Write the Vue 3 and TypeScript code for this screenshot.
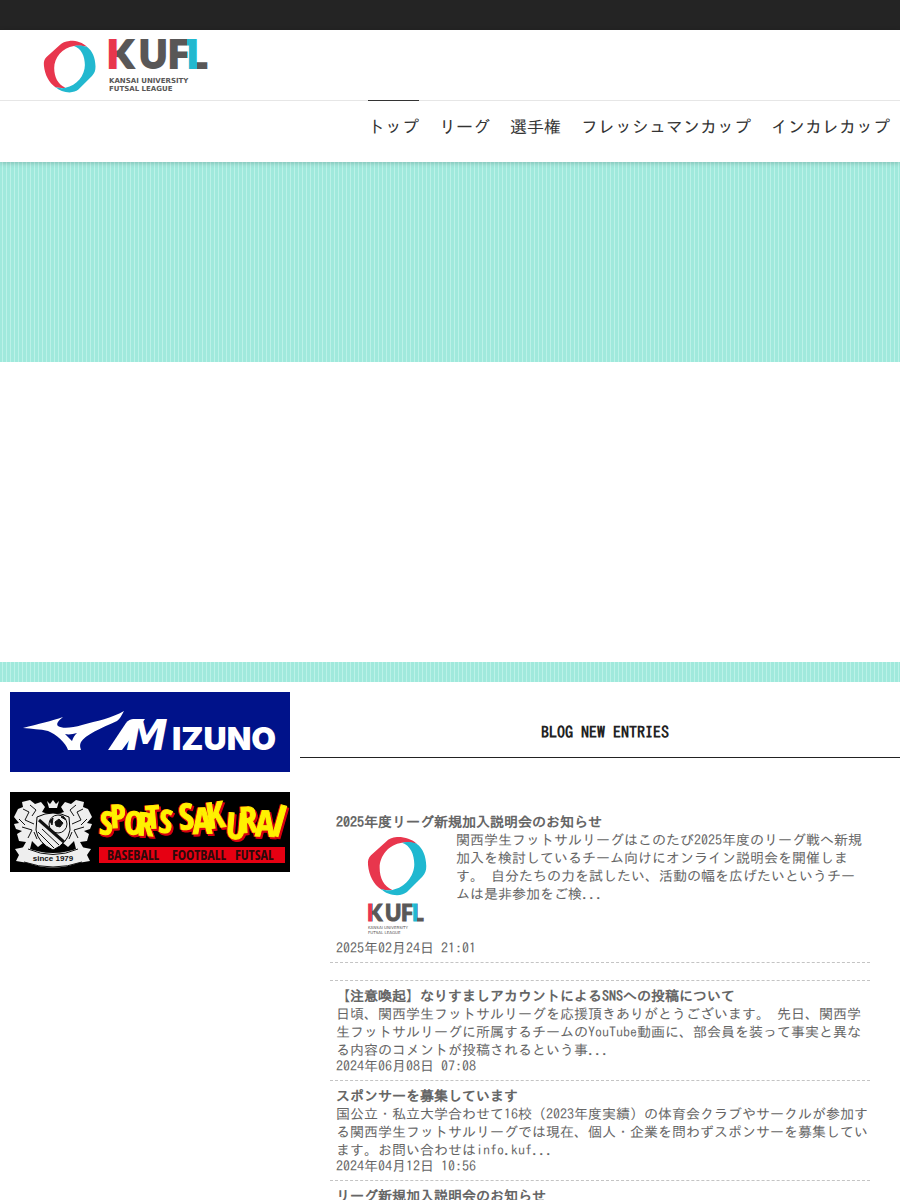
<script setup lang="ts">
interface NavItem {
  label: string
  active?: boolean
}

interface Entry {
  title: string
  body: string
  date: string
}

const navItems: NavItem[] = [
  { label: 'トップ', active: true },
  { label: 'リーグ' },
  { label: '選手権' },
  { label: 'フレッシュマンカップ' },
  { label: 'インカレカップ' },
]

const featured: Entry[] = [
  {
    title: '2025年度リーグ新規加入説明会のお知らせ',
    body: '関西学生フットサルリーグはこのたび2025年度のリーグ戦へ新規加入を検討しているチーム向けにオンライン説明会を開催します。 自分たちの力を試したい、活動の幅を広げたいというチームは是非参加をご検...',
    date: '2025年02月24日 21:01',
  },
]

const entries: Entry[] = [
  {
    title: '【注意喚起】なりすましアカウントによるSNSへの投稿について',
    body: '日頃、関西学生フットサルリーグを応援頂きありがとうございます。 先日、関西学生フットサルリーグに所属するチームのYouTube動画に、部会員を装って事実と異なる内容のコメントが投稿されるという事...',
    date: '2024年06月08日 07:08',
  },
  {
    title: 'スポンサーを募集しています',
    body: '国公立・私立大学合わせて16校（2023年度実績）の体育会クラブやサークルが参加する関西学生フットサルリーグでは現在、個人・企業を問わずスポンサーを募集しています。お問い合わせはinfo.kuf...',
    date: '2024年04月12日 10:56',
  },
  { title: 'リーグ新規加入説明会のお知らせ', body: '', date: '' },
]

const ringRed =
  'M150 24C135 8 110 2 90 3C75 4 65 9 57 17L12 58C4 66 2 74 3 86C6 118 20 145 42 160C55 163 66 163 76 162C50 150 38 125 38 95C38 60 65 25 105 20C125 18 140 20 150 24Z'
const ringCyan =
  'M105 20C130 28 142 55 142 85C142 120 115 155 76 162C66 164 52 164 40 158C55 172 72 178 90 178C103 177 112 174 120 168L166 122C175 112 178 104 178 90C177 60 168 38 150 24C138 18 120 17 105 20Z'
</script>

<template>
  <div class="page">
    <div class="topbar"></div>
    <header class="header">
      <a class="brand" href="#" aria-label="KUFL">
        <svg width="172" height="60" viewBox="0 0 172 60">
          <defs>
            <linearGradient id="wordmark" gradientUnits="userSpaceOnUse" x1="0" y1="0" x2="200" y2="0">
              <stop offset="0.385" stop-color="#e8364d" />
              <stop offset="0.385" stop-color="#595757" />
              <stop offset="0.735" stop-color="#595757" />
              <stop offset="0.735" stop-color="#22b8cf" />
              <stop offset="0.785" stop-color="#22b8cf" />
              <stop offset="0.785" stop-color="#595757" />
            </linearGradient>
          </defs>
          <g transform="translate(3 5) scale(0.295)">
            <path :d="ringRed" fill="#e8364d" />
            <path :d="ringCyan" fill="#22b8cf" />
          </g>
          <text class="mark" x="67 99 128 147" y="33" font-size="38" fill="url(#wordmark)" stroke="url(#wordmark)" stroke-width="2">KUFL</text>
          <text class="sub" x="69" y="48" font-size="7">KANSAI UNIVERSITY</text>
          <text class="sub" x="69" y="56" font-size="7">FUTSAL LEAGUE</text>
        </svg>
      </a>
      <nav class="nav">
        <ul>
          <li v-for="item in navItems" :key="item.label">
            <a href="#" :class="{ active: item.active }">{{ item.label }}</a>
          </li>
        </ul>
      </nav>
    </header>
    <div class="stripes hero"></div>
    <div class="blank"></div>
    <div class="stripes strip"></div>

    <main class="main">
      <aside class="side">
        <a href="#" aria-label="MIZUNO">
          <svg class="banner" viewBox="0 0 280 80">
            <rect width="280" height="80" fill="#00128a" />
            <path
              fill="#fff"
              d="M13 36C28 32 42 29 53 25C48 29 46 32 48 34C52 37 62 36 72 33C87 29 102 26 114 19C111 24 110 27 107 29C91 36 75 43 71 50C69 54 71 57 71 58H58C56 51 46 42 38 39C30 37 22 37 13 36Z"
            />
            <path fill="#00128a" d="M55 42C59 43 63 42 67 41C64 44 63 46 62 49Z" />
            <path fill="#fff" d="M98 58L116 31Q119 27 124 27H135L112 58Z" />
            <text class="mz-m" x="116" y="58" font-size="42">M</text>
            <text class="mz" x="162" y="58" font-size="32">IZUNO</text>
          </svg>
        </a>
        <a href="#" aria-label="SPORTS SAKURAI">
          <svg class="banner" viewBox="0 0 280 80">
            <rect width="280" height="80" />
            <g fill="#eee">
              <path d="M4 25L8 17L13 15L12 10L20 8L25 12L31 10L35 15L32 20L38 22L40 27L34 29L35 36L29 43L33 51L28 55L22 49L20 57H12L16 50L9 49L7 42L12 39L6 37L4 32L9 31Z" />
              <path d="M82 25L78 17L73 15L74 10L66 8L61 12L55 10L51 15L54 20L48 22L46 27L52 29L51 36L57 43L53 51L58 55L64 49L66 57H74L70 50L77 49L79 42L74 39L80 37L82 32L77 31Z" />
              <path d="M37 9L40 12L43 8L46 12L49 9L47 16H39Z" />
              <path d="M5 57L15 55Q43 67 71 55L81 57L77 63L80 69L68 71Q43 80 18 71L6 69L9 63Z" />
            </g>
            <path d="M27 25Q43 17 59 25L60 38Q58 51 43 58Q28 51 26 38Z" fill="#eee" stroke="#000" />
            <g fill="none" stroke="#111">
              <path d="M13 17L19 20L15 28L24 32M20 13L26 18L22 24M12 35L22 38L18 46M9 27L15 33M24 40L27 47" />
              <path d="M73 17L67 20L71 28L62 32M66 13L60 18L64 24M74 35L64 38L68 46M77 27L71 33M62 40L59 47" />
              <path d="M28 40L44 56M32 37L49 53M18 57Q43 68 68 57M14 70Q43 80 72 70" />
              <path d="M29 28L54 50" stroke-width="3" />
              <circle cx="48" cy="32" r="9" />
              <path d="M45 30L49 27L53 31L50 35L46 34ZM40 29L43 26L42 33ZM53 24L56 28L51 25Z" fill="#111" />
            </g>
            <text class="since" x="43" y="69" font-size="8" text-anchor="middle">since 1979</text>
            <g class="comic">
              <text x="89 101 114 127 137 148" y="42 36 42 43 37 40" rotate="4 -3 2 4 -5 6" font-size="32">SPORTS</text>
              <text x="170 183 198 215 230 245" y="38 42 37 46 41 44" rotate="-5 -2 -8 5 -3 2" font-size="36">SAKURA</text>
              <text x="259" y="42" rotate="16" font-size="44">I</text>
            </g>
            <rect x="89" y="55" width="186" height="16" fill="#e60012" />
            <g class="label" font-size="14">
              <text x="97" y="68">BASEBALL</text>
              <text x="162" y="68">FOOTBALL</text>
              <text x="225" y="68">FUTSAL</text>
            </g>
          </svg>
        </a>
      </aside>

      <section class="blog">
        <h2>BLOG NEW ENTRIES</h2>
        <ul class="entries">
          <li v-for="e in featured" :key="e.title">
            <a class="title" href="#">{{ e.title }}</a>
            <div class="media">
              <svg class="thumb" width="100" height="110" viewBox="0 0 100 110">
                <defs>
                  <linearGradient id="thumb-mark" gradientUnits="userSpaceOnUse" x1="0" y1="0" x2="100" y2="0">
                    <stop offset="0.26" stop-color="#e8364d" />
                    <stop offset="0.26" stop-color="#595757" />
                    <stop offset="0.665" stop-color="#595757" />
                    <stop offset="0.665" stop-color="#1fb8d0" />
                    <stop offset="0.715" stop-color="#1fb8d0" />
                    <stop offset="0.715" stop-color="#595757" />
                  </linearGradient>
                </defs>
                <g transform="translate(21 5) scale(0.333)">
                  <path :d="ringRed" fill="#e8364d" />
                  <path :d="ringCyan" fill="#1fb8d0" />
                </g>
                <text class="mark" x="21 39 55 66" y="90" font-size="22" fill="url(#thumb-mark)" stroke="url(#thumb-mark)" stroke-width="1">KUFL</text>
                <text class="tiny" x="22" y="98" font-size="4">KANSAI UNIVERSITY</text>
                <text class="tiny" x="22" y="103" font-size="4">FUTSAL LEAGUE</text>
              </svg>
              <p>{{ e.body }}</p>
            </div>
            <time>{{ e.date }}</time>
          </li>
          <li class="spacer" aria-hidden="true"></li>
          <li v-for="e in entries" :key="e.title">
            <a class="title" href="#">{{ e.title }}</a>
            <p v-if="e.body">{{ e.body }}</p>
            <time v-if="e.date">{{ e.date }}</time>
          </li>
        </ul>
      </section>
    </main>
  </div>
</template>

<style>
body {
  margin: 0;
  background: #fff;
}
</style>

<style scoped>
.page {
  height: 100vh;
  overflow: hidden;
  color: #666;
  font-family: 'IPAGothic', 'Noto Sans Mono CJK JP', 'Noto Sans CJK JP', monospace;
  font-size: 14px;
  line-height: 18px;
}
ul,
p,
h2 {
  margin: 0;
  padding: 0;
}
ul {
  list-style: none;
}
a {
  color: inherit;
  text-decoration: none;
}
.topbar {
  height: 30px;
  background: #242424;
}
.header {
  position: relative;
  box-shadow: 0 1px 5px rgba(0, 0, 0, 0.2);
}
.brand {
  display: block;
  height: 65px;
  padding: 5px 0 0 40px;
}
.nav {
  border-top: 1px solid #e6e6e6;
}
.nav ul {
  display: flex;
  justify-content: flex-end;
  gap: 20px;
  padding-right: 10px;
}
.nav a {
  display: block;
  margin-top: -1px;
  padding: 16px 0 25px;
  border-top: 1px solid transparent;
  color: #333;
  font-size: 17px;
  line-height: 20px;
  white-space: nowrap;
}
.nav a.active {
  border-top-color: #333;
}
.stripes {
  background: repeating-linear-gradient(90deg, #a0e9dc 0 2px, #bbf2e8 2px 3px, #a0e9dc 3px 4px);
}
.hero {
  height: 200px;
}
.blank {
  height: 300px;
}
.strip {
  height: 20px;
}
.main {
  display: grid;
  grid-template-columns: 300px minmax(0, 1fr);
}
.side {
  display: flex;
  flex-direction: column;
  gap: 20px;
  padding: 10px;
}
.banner {
  display: block;
  width: 100%;
}
h2 {
  padding: 40px 0 15px 10px;
  border-bottom: 1px solid #222;
  color: #222;
  font-size: 16px;
  line-height: 20px;
  text-align: center;
}
.entries {
  margin: 49px 30px 0;
}
.entries li {
  padding: 6px 0 6px 6px;
  border-bottom: 1px dashed #c4c4c4;
}
.entries li.spacer {
  padding: 0;
  height: 17px;
}
.title {
  display: block;
  font-weight: bold;
}
.media {
  display: flex;
  align-items: flex-start;
  gap: 10px;
  padding-right: 6px;
}
.media p {
  flex: 1;
}
.thumb {
  flex: none;
  margin-left: 10px;
}
time {
  display: block;
  line-height: 15px;
}
.mark {
  font-family: Lato, 'Liberation Sans', sans-serif;
  font-weight: 900;
}
.sub,
.tiny {
  fill: #595757;
  font-family: 'DejaVu Sans', sans-serif;
  font-weight: 700;
}
.tiny {
  font-weight: 400;
}
.mz-m {
  fill: #fff;
  font-family: 'DejaVu Sans', sans-serif;
  font-style: italic;
  font-weight: 700;
}
.mz {
  fill: #fff;
  font-family: Inter, sans-serif;
  font-weight: 900;
}
.since {
  fill: #111;
  font-family: 'Liberation Sans', sans-serif;
  font-weight: 700;
}
.comic {
  fill: #fff100;
  stroke: #fff100;
  stroke-width: 1;
  filter: drop-shadow(2px 2px 0 #d7000f) drop-shadow(-1px 0 0 #d7000f);
}
.comic,
.label {
  font-family: 'Liberation Sans Narrow', 'Open Sans Condensed', 'Liberation Sans', sans-serif;
  font-weight: 700;
}
.label {
  fill: #2b0a0a;
}
</style>
